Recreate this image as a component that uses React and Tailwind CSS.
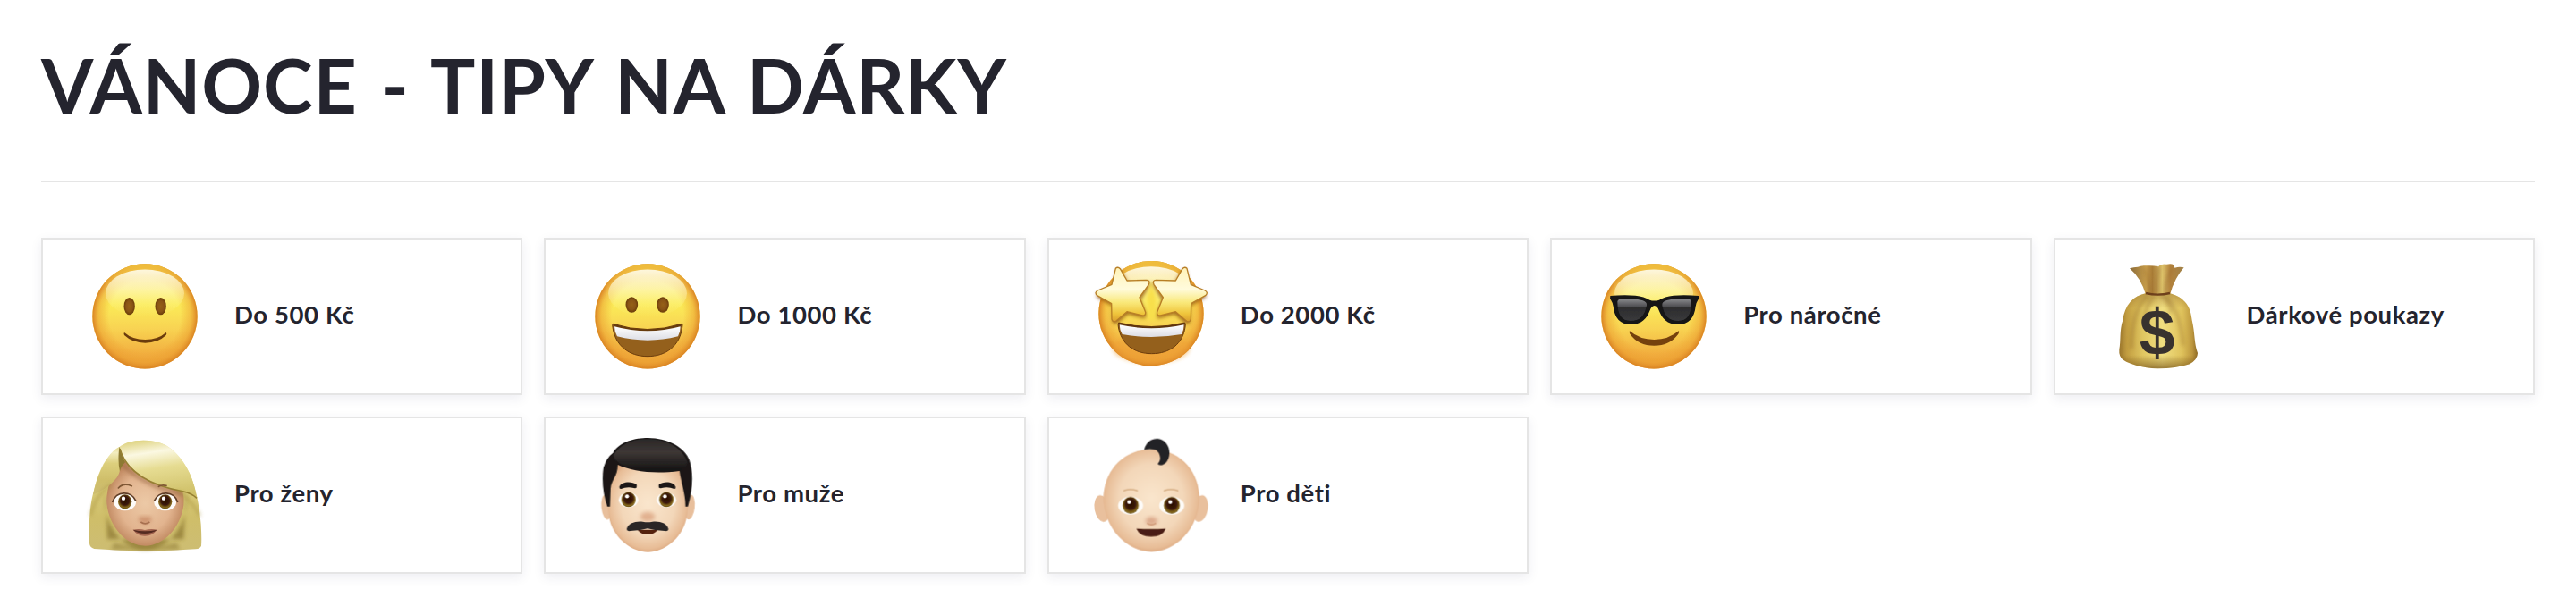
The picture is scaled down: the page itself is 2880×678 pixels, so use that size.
import React from 'react'

const Defs = () => (
    <svg className="absolute w-0 h-0" aria-hidden="true">
      <defs>
        <linearGradient id="face" x1="0" y1="0" x2="0" y2="1">
          <stop offset="0" stopColor="#fbe98a" />
          <stop offset="0.16" stopColor="#fcee84" />
          <stop offset="0.38" stopColor="#fbec58" />
          <stop offset="0.62" stopColor="#f8d352" />
          <stop offset="0.85" stopColor="#f2b040" />
          <stop offset="1" stopColor="#eca438" />
        </linearGradient>
        <radialGradient id="faceEdge">
          <stop offset="0.68" stopColor="#ec9a2c" stopOpacity="0" />
          <stop offset="0.88" stopColor="#ea9a2d" stopOpacity="0.5" />
          <stop offset="1" stopColor="#da8424" stopOpacity="1" />
        </radialGradient>
        <linearGradient id="gloss" x1="0" y1="0" x2="0" y2="1">
          <stop offset="0" stopColor="#fffdf0" stopOpacity="0.9" />
          <stop offset="0.35" stopColor="#fffbd8" stopOpacity="0.6" />
          <stop offset="1" stopColor="#fdf27a" stopOpacity="0" />
        </linearGradient>
        <linearGradient id="topRim" x1="0" y1="0" x2="0" y2="1">
          <stop offset="0" stopColor="#f0bf3c" />
          <stop offset="0.25" stopColor="#f0bf3c" stopOpacity="0" />
        </linearGradient>
        <linearGradient id="teeth" x1="0" y1="0" x2="0" y2="1">
          <stop offset="0" stopColor="#ffffff" />
          <stop offset="1" stopColor="#dcdde4" />
        </linearGradient>
        <radialGradient id="eye">
          <stop offset="0" stopColor="#95601a" />
          <stop offset="0.6" stopColor="#8a5514" />
          <stop offset="1" stopColor="#6b3d0c" />
        </radialGradient>
        <linearGradient id="star" x1="0" y1="0" x2="0" y2="1">
          <stop offset="0" stopColor="#fff3b8" />
          <stop offset="0.4" stopColor="#fffbdc" />
          <stop offset="0.65" stopColor="#f9e878" />
          <stop offset="0.85" stopColor="#efc53c" />
          <stop offset="1" stopColor="#d99d2c" />
        </linearGradient>
        <linearGradient id="lens" x1="0" y1="0" x2="0" y2="1">
          <stop offset="0" stopColor="#8b8c90" />
          <stop offset="0.38" stopColor="#4a4a4d" />
          <stop offset="0.42" stopColor="#2c2c2e" />
          <stop offset="1" stopColor="#3a3a3c" />
        </linearGradient>
        <linearGradient id="bag" x1="0" y1="0" x2="1" y2="0">
          <stop offset="0" stopColor="#9a752b" />
          <stop offset="0.1" stopColor="#c29d40" />
          <stop offset="0.3" stopColor="#e0c661" />
          <stop offset="0.55" stopColor="#f0de80" />
          <stop offset="0.8" stopColor="#dfc25c" />
          <stop offset="0.93" stopColor="#bd973e" />
          <stop offset="1" stopColor="#8d6825" />
        </linearGradient>
        <linearGradient id="bagBottom" x1="0" y1="0" x2="0" y2="1">
          <stop offset="0" stopColor="#8a5c20" stopOpacity="0.45" />
          <stop offset="0.2" stopColor="#8a5c20" stopOpacity="0" />
          <stop offset="0.82" stopColor="#7a5518" stopOpacity="0" />
          <stop offset="1" stopColor="#6b4814" stopOpacity="0.65" />
        </linearGradient>
        <linearGradient id="bagTop" x1="0" y1="0" x2="1" y2="0">
          <stop offset="0" stopColor="#8a6a38" />
          <stop offset="0.3" stopColor="#c79d4a" />
          <stop offset="0.42" stopColor="#a87b36" />
          <stop offset="0.6" stopColor="#ddc26a" />
          <stop offset="0.75" stopColor="#b3823c" />
          <stop offset="1" stopColor="#a08148" />
        </linearGradient>
        <linearGradient id="hair" x1="0" y1="0" x2="0" y2="1">
          <stop offset="0" stopColor="#e2d78a" />
          <stop offset="0.12" stopColor="#f3edc0" />
          <stop offset="0.35" stopColor="#dccf7c" />
          <stop offset="0.7" stopColor="#cfbe6a" />
          <stop offset="1" stopColor="#cdbd72" />
        </linearGradient>
        <linearGradient id="sweep" x1="0.3" y1="0" x2="0.5" y2="1">
          <stop offset="0" stopColor="#e0d586" />
          <stop offset="0.22" stopColor="#fbf8e2" />
          <stop offset="0.5" stopColor="#e6dc92" />
          <stop offset="1" stopColor="#cfc068" />
        </linearGradient>
        <radialGradient id="womanSkin" cx="0.5" cy="0.5" r="0.55">
          <stop offset="0" stopColor="#ecc9a6" />
          <stop offset="0.6" stopColor="#e2b48f" />
          <stop offset="1" stopColor="#b97f56" />
        </radialGradient>
        <radialGradient id="paleSkin" cx="0.5" cy="0.48" r="0.56">
          <stop offset="0" stopColor="#fae6cd" />
          <stop offset="0.6" stopColor="#f3d7b9" />
          <stop offset="0.86" stopColor="#e8bd97" />
          <stop offset="1" stopColor="#d69d73" />
        </radialGradient>
        <radialGradient id="iris" cx="0.5" cy="0.42" r="0.6">
          <stop offset="0" stopColor="#2a0d04" />
          <stop offset="0.52" stopColor="#3c1a08" />
          <stop offset="0.8" stopColor="#86691c" />
          <stop offset="1" stopColor="#5d4414" />
        </radialGradient>
        <linearGradient id="darkHair" x1="0" y1="0" x2="0" y2="1">
          <stop offset="0" stopColor="#2a2828" />
          <stop offset="0.4" stopColor="#3e3735" />
          <stop offset="1" stopColor="#141313" />
        </linearGradient>
        <filter id="soft" x="-30%" y="-30%" width="160%" height="160%">
          <feGaussianBlur stdDeviation="6" />
        </filter>
        <filter id="fine" x="-10%" y="-10%" width="120%" height="120%">
          <feGaussianBlur stdDeviation="1.5" />
        </filter>
      </defs>
    </svg>
)

const Emoji = ({ children }) => (
    <svg viewBox="0 0 384 384" className="w-32 h-32 shrink-0 overflow-visible">
      <g filter="url(#fine)">{children}</g>
    </svg>
)

const Ball = ({ cy = 191.5 }) => (
    <>
      <circle cx="192" cy={cy} r="176" fill="url(#face)" />
      <circle cx="192" cy={cy} r="176" fill="url(#faceEdge)" />
      <circle cx="192" cy={cy} r="176" fill="url(#topRim)" />
      <ellipse cx="192" cy={cy - 77} rx="132" ry="80" fill="url(#gloss)" />
    </>
)

const Slight = () => (
    <Emoji>
      <Ball />
      <ellipse cx="140" cy="158" rx="18.5" ry="29" fill="url(#eye)" />
      <ellipse cx="245" cy="158" rx="18.5" ry="29" fill="url(#eye)" />
      <path d="M123 246 Q150 270 193 270 Q236 270 263 246 Q267 249 263 255 Q236 281 193 281 Q150 281 123 255 Q120 249 123 246Z" fill="#6b3b0a" />
    </Emoji>
)

const Grin = () => (
    <Emoji>
      <Ball />
      <ellipse cx="139" cy="153" rx="20.5" ry="26" fill="url(#eye)" />
      <ellipse cx="243" cy="153" rx="20.5" ry="26" fill="url(#eye)" />
      <path d="M76 217 Q192 254 306 217 Q311 218 308 229 C300 290 255 326 192 326 C129 326 84 290 75 229 Q73 218 76 217Z" fill="#94601c" stroke="#6a3b0c" strokeWidth="3" />
      <path d="M76 217 Q192 254 306 217 L304 228 Q192 258 79 228Z" fill="#663a0e" />
      <path d="M81 226 Q192 256 302 226 Q302 244 294 259 Q192 285 90 259 Q81 244 81 226Z" fill="url(#teeth)" />
    </Emoji>
)

const starPath = 'M73 31 Q80 24 88 32 L111 72 L177 70 Q190 71 184 85 L153 128 L173 178 Q174 190 162 189 L111 176 L74 208 Q63 213 60 201 L59 149 L11 122 Q0 112 13 105 L60 85Z'

const StarStruck = () => (
    <Emoji>
      <Ball cy={182} />
      <ellipse cx="192" cy="300" rx="130" ry="50" fill="#eea037" opacity="0.45" filter="url(#soft)" />
      <g opacity="0.8" filter="url(#soft)" fill="#8a4a08">
        <path d={starPath} transform="translate(3 8)" />
        <path d={starPath} transform="translate(382 8) scale(-1 1)" />
      </g>
      <path d="M192 70 L176 130 L186 205 L204 205 L210 130Z" fill="#f8df4c" filter="url(#soft)" />
      <path d="M83 213 Q192 240 305 213 Q308 216 306 228 C298 284 255 317 194 317 C133 317 92 284 82 228 Q80 216 83 213Z" fill="#94601c" stroke="#6a3b0c" strokeWidth="3" />
      <path d="M83 213 Q192 240 305 213 L302 224 Q192 246 86 224Z" fill="#5d330c" />
      <path d="M86 220 Q192 244 302 220 Q302 237 294 252 Q192 270 95 252 Q86 237 86 220Z" fill="url(#teeth)" />
      <path d={starPath} fill="url(#star)" stroke="#b87f26" strokeWidth="4" strokeLinejoin="round" />
      <path d={starPath} transform="translate(385 0) scale(-1 1)" fill="url(#star)" stroke="#b87f26" strokeWidth="4" strokeLinejoin="round" />
    </Emoji>
)

const Cool = () => (
    <Emoji>
      <Ball />
      <path d="M46 123 Q90 119 130 122 Q160 125 178 137 Q193 142 210 137 Q228 125 258 122 Q298 119 342 123 Q345 131 339 139 Q334 146 332 158 C328 196 310 219 272 219 C237 219 220 200 209 172 Q204 157 194 156 Q184 157 179 172 C168 200 151 219 116 219 C78 219 60 196 56 158 Q54 146 49 139 Q43 131 46 123Z" fill="#121213" />
      <path d="M70 142 Q72 134 84 133 Q125 130 153 138 Q170 143 168 155 C162 190 144 207 114 207 C84 207 70 188 70 142Z" fill="url(#lens)" />
      <path d="M318 142 Q316 134 304 133 Q263 130 235 138 Q218 143 220 155 C226 190 244 207 274 207 C304 207 318 188 318 142Z" fill="url(#lens)" />
      <path d="M111 241 Q145 270 193 270 Q241 270 275 241 Q279 243 274 251 C255 277 228 290 193 290 C158 290 131 277 112 251 Q108 243 111 241Z" fill="#744110" />
    </Emoji>
)

const MoneyBag = () => (
    <Emoji>
      <path d="M99 31 Q112 26 126 26 Q140 20 152 22 Q176 20 196 25 Q204 15 222 17 Q240 13 246 19 L250 29 Q266 24 281 28 Q250 62 234 119 L153 119 Q136 62 99 31Z" fill="url(#bagTop)" />
      <path d="M150 32 Q160 70 170 114 M196 28 Q188 70 190 114 M240 30 Q222 70 218 114" fill="none" stroke="#8c5f2c" strokeWidth="7" opacity="0.5" filter="url(#soft)" />
      <path d="M155 114 L232 114 C285 128 304 160 308 205 C318 248 315 285 327 315 Q327 336 300 352 Q255 367 192 367 Q115 362 78 338 Q62 328 64 303 C70 275 64 240 76 205 C82 155 110 122 155 114Z" fill="url(#bag)" />
      <path d="M155 114 L232 114 C285 128 304 160 308 205 C318 248 315 285 327 315 Q327 336 300 352 Q255 367 192 367 Q115 362 78 338 Q62 328 64 303 C70 275 64 240 76 205 C82 155 110 122 155 114Z" fill="url(#bagBottom)" />
      <path d="M160 124 Q105 170 105 300 M180 124 Q150 160 148 210 M222 124 Q270 180 278 290 M205 122 Q230 140 240 180" fill="none" stroke="#8a6122" strokeWidth="8" opacity="0.45" filter="url(#soft)" />
      <path d="M153 114 Q193 124 234 114" fill="none" stroke="#6e3f1c" strokeWidth="7" />
      <text x="191" y="322" textAnchor="middle" fontFamily="Liberation Sans, Arial, sans-serif" fontWeight="700" fontSize="214" fill="#38302f">$</text>
    </Emoji>
)

const Eye = ({ x, y, rx = 38, ry = 30, r = 25 }) => (
    <>
      <ellipse cx={x} cy={y} rx={rx} ry={ry} fill="#fdfbf8" />
      <ellipse cx={x} cy={y - 1} rx={r} ry={r + 1} fill="url(#iris)" />
      <circle cx={x - 5} cy={y - 12} r="6.5" fill="#fff" />
    </>
)

const Woman = () => (
    <Emoji>
      <path d="M104 32 C130 6 210 -2 262 24 C340 72 370 170 380 290 Q383 340 381 362 Q378 371 362 373 Q192 386 22 372 Q7 368 6 354 C4 290 6 230 20 180 C36 110 60 60 104 32Z" fill="url(#hair)" />
      <path d="M60 180 C44 260 100 376 194 376 C288 376 346 260 330 180 L322 340 L66 340Z" fill="#77611f" opacity="0.55" filter="url(#soft)" />
      <path d="M90 352 Q192 384 298 352 L310 374 L78 374Z" fill="#77611f" opacity="0.4" filter="url(#soft)" />
      <path d="M110 100 C80 120 62 170 64 220 C72 300 130 362 193 362 C256 362 312 300 322 225 C324 205 322 190 318 182 Q190 150 124 76Z" fill="url(#womanSkin)" />
      <path d="M118 90 Q190 160 318 188" fill="none" stroke="#8d5a35" strokeWidth="14" opacity="0.5" filter="url(#soft)" />
      <path d="M106 30 C68 48 36 110 18 190 C62 172 104 140 108 108 Q114 70 106 30Z" fill="url(#hair)" />
      <path d="M106 30 Q100 80 108 112 Q112 94 126 82 Q114 60 108 32Z" fill="#8d7a30" filter="url(#fine)" />
      <path d="M107 32 C130 6 210 -2 262 24 C325 65 355 130 366 202 Q350 187 322 180 C220 160 128 112 107 32Z" fill="url(#sweep)" />
      <path d="M108 36 C128 108 200 158 322 180 Q350 187 366 202" fill="none" stroke="#968033" strokeWidth="5" />
      <path d="M304 178 Q350 210 377 262 M80 156 Q26 190 10 260" fill="none" stroke="#a7913f" strokeWidth="7" opacity="0.7" filter="url(#soft)" />
      <path d="M103 168 Q120 149 148 161 M238 163 Q248 156 264 160" fill="none" stroke="#7e5734" strokeWidth="5" strokeLinecap="round" />
      <Eye x={125} y={215} rx={37} ry={29} r={23} />
      <Eye x={260} y={215} rx={37} ry={29} r={23} />
      <path d="M83 216 C94 176 148 176 162 212 M302 216 C291 176 237 176 223 212" fill="none" stroke="#5f3c26" strokeWidth="5" />
      <path d="M172 264 Q168 284 182 284 Q193 296 204 284 Q218 284 212 264" fill="#c98c68" opacity="0.8" filter="url(#soft)" />
      <path d="M178 282 Q193 293 208 282" fill="none" stroke="#a76f50" strokeWidth="5" />
      <path d="M152 308 Q172 303 192 309 Q214 303 233 308 Q216 330 192 329 Q168 330 152 308Z" fill="#a36550" />
      <path d="M152 308 Q192 318 233 308 Q216 321 192 321 Q168 321 152 308Z" fill="#552c20" />
    </Emoji>
)

const Man = () => (
    <Emoji>
      <ellipse cx="54" cy="232" rx="17" ry="42" transform="rotate(-6 54 232)" fill="#e8bf9c" />
      <ellipse cx="333" cy="232" rx="17" ry="42" transform="rotate(6 333 232)" fill="#e8bf9c" />
      <path d="M76 70 L310 70 C330 150 331 230 321 276 C304 340 246 383 193 383 C140 383 82 340 65 276 C55 230 56 150 76 70Z" fill="url(#paleSkin)" />
      <path d="M57 230 C42 190 38 140 44 100 Q54 66 76 50 C98 12 150 0 193 0 C262 0 318 34 332 74 C346 114 345 170 327 230 L319 230 C320 190 304 150 299 111 C210 122 140 112 92 90 C92 130 70 140 68 170 L66 230Z" fill="#1b1919" />
      <path d="M78 58 C104 16 150 4 193 4 C260 4 312 38 325 82 Q322 104 298 108 C210 118 120 104 92 80 Q80 72 78 58Z" fill="url(#darkHair)" />
      <path d="M97 164 C104 145 140 145 155 156 Q158 172 146 168 Q122 163 103 171 Q97 172 97 164Z M286 164 C279 145 245 145 230 156 Q227 172 239 168 Q262 163 281 171 Q287 172 286 164Z" fill="#1c1817" />
      <Eye x={128} y={208} rx={33} ry={25} r={24} />
      <Eye x={255} y={208} rx={33} ry={25} r={24} />
      <ellipse cx="192" cy="264" rx="25" ry="16" fill="#dca582" opacity="0.8" filter="url(#soft)" />
      <path d="M158 308 L226 308 Q214 324 192 324 Q170 324 158 308Z" fill="#54200f" />
      <path d="M122 306 C126 286 152 278 176 281 Q192 284 208 281 C232 278 258 286 262 306 Q262 314 250 312 Q220 312 192 304 Q164 312 134 312 Q122 314 122 306Z" fill="#292627" />
    </Emoji>
)

const Baby = () => (
    <Emoji>
      <ellipse cx="27" cy="237" rx="25" ry="45" transform="rotate(-10 27 237)" fill="#e9c09d" />
      <ellipse cx="357" cy="237" rx="25" ry="45" transform="rotate(10 357 237)" fill="#e9c09d" />
      <path d="M193 38 C280 38 346 100 353 190 C358 300 276 382 193 382 C110 382 28 300 32 190 C40 100 106 38 193 38Z" fill="url(#paleSkin)" />
      <path d="M168 40 C176 8 200 0 216 3 C242 8 254 30 253 52 C252 74 240 90 224 91 Q212 90 215 85 C228 74 222 46 206 40 Q188 34 168 40Z" fill="#232225" />
      <path d="M101 177 Q122 169 145 177 M236 177 Q258 169 281 177" fill="none" stroke="#d7b087" strokeWidth="5" strokeLinecap="round" />
      <Eye x={123} y={227} rx={42} ry={30} r={27} />
      <Eye x={261} y={227} rx={42} ry={30} r={27} />
      <ellipse cx="193" cy="278" rx="20" ry="13" fill="#d9a384" opacity="0.9" filter="url(#soft)" />
      <path d="M178 286 Q193 296 208 286" fill="none" stroke="#cf9876" strokeWidth="5" />
      <path d="M142 304 Q192 307 241 304 Q230 331 192 331 Q154 331 142 304Z" fill="#4a1d12" />
    </Emoji>
)

const categories = [
    { label: 'Do 500 Kč', icon: Slight },
    { label: 'Do 1000 Kč', icon: Grin },
    { label: 'Do 2000 Kč', icon: StarStruck },
    { label: 'Pro náročné', icon: Cool },
    { label: 'Dárkové poukazy', icon: MoneyBag },
    { label: 'Pro ženy', icon: Woman },
    { label: 'Pro muže', icon: Man },
    { label: 'Pro děti', icon: Baby },
]

const CategoryCard = ({ label, icon: Icon }) => (
    <a href="#" className="h-44 flex items-center pl-[50px] border-2 border-[#e5e5e5] bg-white shadow-[0_4px_12px_rgba(40,40,90,0.08)]">
      <Icon />
      <span className="ml-9 -mt-1 text-[27.5px] leading-9 font-bold tracking-[0.6px] whitespace-nowrap">{label}</span>
    </a>
)

const App = () => {
    return (
        <main className="min-h-[678px] bg-white px-[46px] text-[#24242e] font-[Lato,sans-serif]">
          <Defs />
          <header className="h-[204px] pt-[53px] border-b-2 border-[#e5e5e5]">
            <h1 className="text-[84px] leading-none font-bold tracking-[0.9px] [word-spacing:4.5px] whitespace-nowrap">VÁNOCE - TIPY NA DÁRKY</h1>
          </header>
          <div className="mt-[62px] grid grid-cols-5 gap-6">
            {categories.map((item) => (
              <CategoryCard key={item.label} {...item} />
            ))}
          </div>
        </main>
    )
}

export default App
